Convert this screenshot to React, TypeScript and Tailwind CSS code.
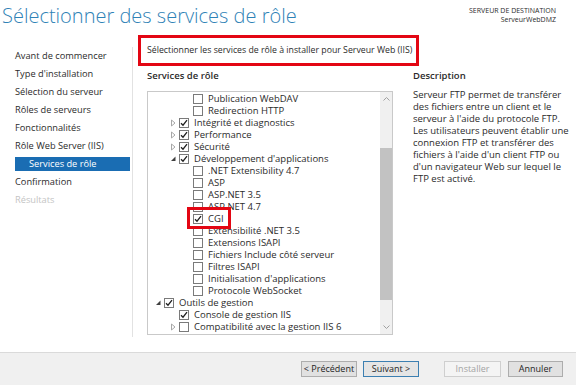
import * as React from 'react'

type Node = {
  label: string
  level: 0 | 1 | 2
  exp?: 'open' | 'closed'
  checked?: boolean
  marked?: boolean
}

const tree: Node[] = [
  { label: 'Publication WebDAV', level: 2 },
  { label: 'Redirection HTTP', level: 2 },
  { label: 'Intégrité et diagnostics', level: 1, exp: 'closed', checked: true },
  { label: 'Performance', level: 1, exp: 'closed', checked: true },
  { label: 'Sécurité', level: 1, exp: 'closed', checked: true },
  { label: "Développement d'applications", level: 1, exp: 'open', checked: true },
  { label: '.NET Extensibility 4.7', level: 2 },
  { label: 'ASP', level: 2 },
  { label: 'ASP.NET 3.5', level: 2 },
  { label: 'ASP.NET 4.7', level: 2 },
  { label: 'CGI', level: 2, checked: true, marked: true },
  { label: 'Extensibilité .NET 3.5', level: 2 },
  { label: 'Extensions ISAPI', level: 2 },
  { label: 'Fichiers Include côté serveur', level: 2 },
  { label: 'Filtres ISAPI', level: 2 },
  { label: "Initialisation d'applications", level: 2 },
  { label: 'Protocole WebSocket', level: 2 },
  { label: 'Outils de gestion', level: 0, exp: 'open', checked: true },
  { label: 'Console de gestion IIS', level: 1, checked: true },
  { label: 'Compatibilité avec la gestion IIS 6', level: 1, exp: 'closed' },
]

const indent = ['pl-[7px]', 'pl-[22px]', 'pl-[36px]']

const steps = [
  'Avant de commencer',
  "Type d'installation",
  'Sélection du serveur',
  'Rôles de serveurs',
  'Fonctionnalités',
  'Rôle Web Server (IIS)',
]

const description = [
  'Serveur FTP permet de transférer',
  'des fichiers entre un client et le',
  "serveur à l'aide du protocole FTP.",
  'Les utilisateurs peuvent établir une',
  'connexion FTP et transférer des',
  "fichiers à l'aide d'un client FTP ou",
  "d'un navigateur Web sur lequel le",
  'FTP est activé.',
]

function Expander({ state }: { state?: 'open' | 'closed' }) {
  if (state === 'closed')
    return (
      <svg width="9" height="8" viewBox="0 0 9 8">
        <polygon points="1.5,1 5,4 1.5,7" fill="none" stroke="#a8a8a8" strokeWidth="1" />
      </svg>
    )
  if (state === 'open')
    return (
      <svg width="9" height="8" viewBox="0 0 9 8">
        <polygon points="5.5,1.5 5.5,6 1,6" fill="#404040" />
      </svg>
    )
  return <span className="w-[9px]" />
}

function Checkbox({ checked }: { checked?: boolean }) {
  return (
    <span className="flex h-[10px] w-[10px] shrink-0 items-center justify-center border border-[#7a7a7a] bg-white">
      {checked && (
        <svg width="8" height="8" viewBox="0 0 8 8">
          <path d="M1 4.2 L3 6.2 L7 1.2" fill="none" stroke="#1f1f1f" strokeWidth="1.3" />
        </svg>
      )}
    </span>
  )
}

function Button({
  children,
  variant = 'default',
  className,
}: {
  children: React.ReactNode
  variant?: 'default' | 'focus' | 'disabled'
  className?: string
}) {
  const styles = {
    default: 'border-[#adadad] bg-[#e1e1e1] text-[#1e1e1e]',
    focus: 'border-[#3c7fb1] bg-[#e5e5e5] text-[#1e1e1e]',
    disabled: 'border-[#cfcfcf] bg-[#f4f4f4] text-[#a3a3a3]',
  }
  return (
    <div
      className={`flex h-[16px] items-center justify-center border text-[9px] ${styles[variant]} ${className ?? ''}`}
    >
      {children}
    </div>
  )
}

export default function App() {
  return (
    <div className="flex h-[385px] w-[576px] flex-col overflow-hidden bg-white font-['Open_Sans',sans-serif] text-[#2b2b2b]">
      {/* header */}
      <div className="flex h-[35px] justify-between">
        <h1 className="pl-[2px] pt-[5px] text-[20px] font-light leading-[22px] text-[#2f82b6]">
          Sélectionner des services de rôle
        </h1>
        <div className="pr-[20px] pt-[6px] text-right text-[7px] leading-[9px] text-[#2b2b2b]">
          <div>SERVEUR DE DESTINATION</div>
          <div>ServeurWebDMZ</div>
        </div>
      </div>

      {/* body */}
      <div className="flex h-[317px]">
        <nav className="mb-[15px] mt-[12px] w-[133px] border-r border-[#e2e2e2] text-[9.25px]">
          {steps.map((s) => (
            <div key={s} className="flex h-[18px] items-center pl-[15px]">
              {s}
            </div>
          ))}
          <div className="ml-[15px] flex h-[18px] w-[115px] items-center">
            <div className="flex h-[14px] w-full items-center bg-[#1a6db3] pl-[14px] text-white">
              Services de rôle
            </div>
          </div>
          <div className="flex h-[18px] items-center pl-[15px]">Confirmation</div>
          <div className="flex h-[18px] items-center pl-[15px] text-[#c4c4c4]">Résultats</div>
        </nav>

        <div className="ml-[5px] flex flex-col">
          <div className="flex h-[31px] w-[281px] items-center whitespace-nowrap border-[3px] border-[#e30613] pl-[6px] text-[8.75px]">
            Sélectionner les services de rôle à installer pour Serveur Web (IIS)
          </div>

          <div className="ml-[9px] flex">
            <div className="w-[246px]">
              <div className="mt-[4px] text-[9.5px] font-semibold leading-[12px]">Services de rôle</div>
              <div className="mt-[9px] flex h-[244px] border border-[#c9c9c9] bg-white">
                <div className="flex-1 pt-[1px] text-[9.5px]">
                  {tree.map((n) => (
                    <div
                      key={n.label}
                      className={`relative flex h-[12px] items-center ${indent[n.level]}`}
                    >
                      <Expander state={n.exp} />
                      <Checkbox checked={n.checked} />
                      <span className="ml-[5px] whitespace-nowrap leading-[12px]">{n.label}</span>
                      {n.marked && (
                        <span className="absolute left-[39px] top-[-6px] z-10 h-[22px] w-[44px] border-[3px] border-[#e30613]" />
                      )}
                    </div>
                  ))}
                </div>
                <div className="flex w-[12px] flex-col bg-[#f0f0f0]">
                  <div className="flex h-[14px] items-center justify-center">
                    <svg width="7" height="4" viewBox="0 0 7 4">
                      <path d="M0.5 3.5 L3.5 0.5 L6.5 3.5" fill="none" stroke="#a0a0a0" strokeWidth="1" />
                    </svg>
                  </div>
                  <div className="h-[42px]" />
                  <div className="h-[152px] bg-[#c2c2c2]" />
                  <div className="flex-1" />
                  <div className="flex h-[14px] items-center justify-center">
                    <svg width="7" height="4" viewBox="0 0 7 4">
                      <path d="M0.5 0.5 L3.5 3.5 L6.5 0.5" fill="none" stroke="#a0a0a0" strokeWidth="1" />
                    </svg>
                  </div>
                </div>
              </div>
            </div>

            <div className="ml-[20px] w-[160px]">
              <div className="mt-[4px] text-[9.5px] font-semibold leading-[12px]">Description</div>
              <div className="mt-[7px] text-[9.5px] leading-[12px]">
                {description.map((l) => (
                  <div key={l} className="whitespace-nowrap">
                    {l}
                  </div>
                ))}
              </div>
            </div>
          </div>
        </div>
      </div>

      {/* footer */}
      <div className="flex h-[33px] items-start justify-end border-t border-[#dadada] bg-[#f0f0f0] pr-[13px] pt-[8px]">
        <Button className="w-[56px]">&lt; Précédent</Button>
        <Button variant="focus" className="ml-[6px] w-[56px]">
          Suivant &gt;
        </Button>
        <Button variant="disabled" className="ml-[25px] w-[57px]">
          Installer
        </Button>
        <Button className="ml-[7px] w-[55px]">Annuler</Button>
      </div>
    </div>
  )
}
